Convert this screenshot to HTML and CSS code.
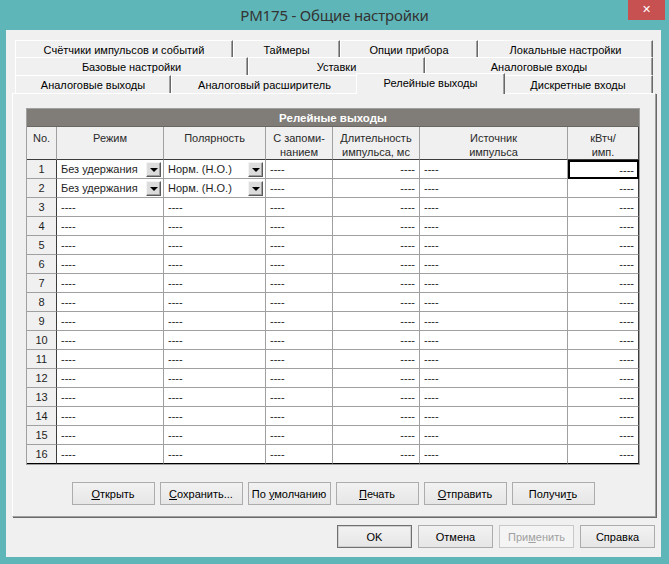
FILE: index.html
```html
<!DOCTYPE html>
<html lang="ru">
<head>
<meta charset="utf-8">
<title>PM175 - Общие настройки</title>
<link rel="stylesheet" href="styles.css">
</head>
<body>
<div class="window">
  <div class="titlebar">
    <div class="title">PM175 - Общие настройки</div>
    <div class="close">&#x2715;</div>
  </div>
  <div class="client">
    <div class="tabs">
      <div class="tab-row">
        <div class="tab t-counters">Счётчики импульсов и событий</div>
        <div class="tab t-timers">Таймеры</div>
        <div class="tab t-options">Опции прибора</div>
        <div class="tab t-local">Локальные настройки</div>
      </div>
      <div class="tab-row">
        <div class="tab t-base">Базовые настройки</div>
        <div class="tab t-setpoints">Уставки</div>
        <div class="tab t-ain">Аналоговые входы</div>
      </div>
      <div class="tab-row last">
        <div class="tab t-aout">Аналоговые выходы</div>
        <div class="tab t-ext">Аналоговый расширитель</div>
        <div class="tab t-relay selected">Релейные выходы</div>
        <div class="tab t-din">Дискретные входы</div>
      </div>
    </div>
    <div class="panel">
      <div class="grid-frame">
        <div class="grid">
          <div class="band">Релейные выходы</div>
          <div class="hc">No.</div>
          <div class="hc">Режим</div>
          <div class="hc">Полярность</div>
          <div class="hc">С запоми-<br>нанием</div>
          <div class="hc">Длительность<br>импульса, мс</div>
          <div class="hc">Источник<br>импульса</div>
          <div class="hc last">кВтч/<br>имп.</div>

          <div class="num">1</div>
          <div class="c"><span class="val">Без удержания</span><span class="dd"></span></div>
          <div class="c"><span class="val">Норм. (Н.О.)</span><span class="dd"></span></div>
          <div class="c">----</div>
          <div class="c r">----</div>
          <div class="c">----</div>
          <div class="c r last sel">----</div>

          <div class="num">2</div>
          <div class="c"><span class="val">Без удержания</span><span class="dd"></span></div>
          <div class="c"><span class="val">Норм. (Н.О.)</span><span class="dd"></span></div>
          <div class="c">----</div>
          <div class="c r">----</div>
          <div class="c">----</div>
          <div class="c r last">----</div>

          <div class="num">3</div><div class="c">----</div><div class="c">----</div><div class="c">----</div><div class="c r">----</div><div class="c">----</div><div class="c r last">----</div>
          <div class="num">4</div><div class="c">----</div><div class="c">----</div><div class="c">----</div><div class="c r">----</div><div class="c">----</div><div class="c r last">----</div>
          <div class="num">5</div><div class="c">----</div><div class="c">----</div><div class="c">----</div><div class="c r">----</div><div class="c">----</div><div class="c r last">----</div>
          <div class="num">6</div><div class="c">----</div><div class="c">----</div><div class="c">----</div><div class="c r">----</div><div class="c">----</div><div class="c r last">----</div>
          <div class="num">7</div><div class="c">----</div><div class="c">----</div><div class="c">----</div><div class="c r">----</div><div class="c">----</div><div class="c r last">----</div>
          <div class="num">8</div><div class="c">----</div><div class="c">----</div><div class="c">----</div><div class="c r">----</div><div class="c">----</div><div class="c r last">----</div>
          <div class="num">9</div><div class="c">----</div><div class="c">----</div><div class="c">----</div><div class="c r">----</div><div class="c">----</div><div class="c r last">----</div>
          <div class="num">10</div><div class="c">----</div><div class="c">----</div><div class="c">----</div><div class="c r">----</div><div class="c">----</div><div class="c r last">----</div>
          <div class="num">11</div><div class="c">----</div><div class="c">----</div><div class="c">----</div><div class="c r">----</div><div class="c">----</div><div class="c r last">----</div>
          <div class="num">12</div><div class="c">----</div><div class="c">----</div><div class="c">----</div><div class="c r">----</div><div class="c">----</div><div class="c r last">----</div>
          <div class="num">13</div><div class="c">----</div><div class="c">----</div><div class="c">----</div><div class="c r">----</div><div class="c">----</div><div class="c r last">----</div>
          <div class="num">14</div><div class="c">----</div><div class="c">----</div><div class="c">----</div><div class="c r">----</div><div class="c">----</div><div class="c r last">----</div>
          <div class="num">15</div><div class="c">----</div><div class="c">----</div><div class="c">----</div><div class="c r">----</div><div class="c">----</div><div class="c r last">----</div>
          <div class="num bottom">16</div><div class="c bottom">----</div><div class="c bottom">----</div><div class="c bottom">----</div><div class="c r bottom">----</div><div class="c bottom">----</div><div class="c r last bottom">----</div>
        </div>
      </div>
      <div class="actions">
        <button class="btn wide"><u>О</u>ткрыть</button>
        <button class="btn wide"><u>С</u>охранить...</button>
        <button class="btn wide">По <u>у</u>молчанию</button>
        <button class="btn wide"><u>П</u>ечать</button>
        <button class="btn wide"><u>О</u>тправить</button>
        <button class="btn wide">Получи<u>т</u>ь</button>
      </div>
    </div>
    <div class="dialog-buttons">
      <button class="btn dlg default">OK</button>
      <button class="btn dlg">Отмена</button>
      <button class="btn dlg disabled">При<u>м</u>енить</button>
      <button class="btn dlg">Справка</button>
    </div>
  </div>
</div>
</body>
</html>
```

FILE: styles.css
```css
* { box-sizing: border-box; }

body {
  margin: 0;
  background: #5fb6b8;
}

.window {
  width: 669px;
  height: 564px;
  background: #5fb6b8;
  font-family: "Liberation Sans", Arial, sans-serif;
  font-size: 11px;
  color: #000;
  display: flex;
  flex-direction: column;
}

.titlebar {
  height: 30px;
  display: grid;
  grid-template-columns: 1fr;
  align-items: start;
}

.title {
  grid-row: 1;
  grid-column: 1;
  justify-self: center;
  font-family: "Noto Sans", "Open Sans", sans-serif;
  font-size: 15px;
  letter-spacing: -0.2px;
  line-height: 30px;
  color: #333333;
}

.close {
  grid-row: 1;
  grid-column: 1;
  justify-self: end;
  margin-right: 4px;
  width: 37px;
  height: 20px;
  background: #c75050;
  color: #fff;
  font-family: "DejaVu Sans", sans-serif;
  font-size: 11px;
  font-weight: bold;
  line-height: 20px;
  text-align: center;
}

.client {
  margin: 0 8px 0 6px;
  height: 527px;
  background: #f0f0f0;
  padding: 10px 5px 0 6px;
  display: flex;
  flex-direction: column;
}

/* Tabs */
.tabs {
  margin: 0 3px;
  display: flex;
  flex-direction: column;
}

.tab-row {
  display: flex;
  height: 18px;
}
.tab-row:first-child { height: 17px; }

.tab {
  flex: none;
  height: 100%;
  display: flex;
  align-items: center;
  justify-content: center;
  background: #f0f0f0;
  border-top: 1px solid #ffffff;
  border-left: 1px solid #ffffff;
  border-right: 1px solid #696969;
  box-shadow: inset -1px 0 0 #a0a0a0;
  white-space: nowrap;
  padding-top: 1px;
}

.t-counters { width: 218px; }
.t-timers { width: 107px; }
.t-options { width: 138px; }
.t-local { width: 175px; }

.t-base { width: 233px; }
.t-setpoints { width: 177px; }
.t-ain { width: 228px; }

.t-aout { width: 156px; }
.t-ext { width: 187px; }
.t-relay { width: 145px; }
.t-din { width: 150px; }

.tab.selected {
  position: relative;
  z-index: 2;
  width: 149px;
  height: 21px;
  margin: -2px -2px -1px -2px;
  align-items: flex-start;
  padding-top: 3px;
}

/* Panel */
.panel {
  height: 424px;
  background: #f0f0f0;
  border: 1px solid;
  border-color: #ffffff #a0a0a0 #a0a0a0 #ffffff;
  box-shadow: 1px 1px 0 #696969;
  padding: 14px 0 0 13px;
  display: flex;
  flex-direction: column;
}

.grid-frame {
  width: 614px;
  border: 1px solid #a0a0a0;
  background: #f0f0f0;
}

.grid {
  display: grid;
  grid-template-columns: 30px 107px 102px 67px 87px 148px 71px;
  grid-template-rows: 18px 33px;
  grid-auto-rows: 19px;
  font-size: 11px;
  color: #1e1e1e;
}

.band {
  grid-column: 1 / -1;
  background: #807c77;
  color: #ffffff;
  font-weight: bold;
  font-size: 11.5px;
  display: flex;
  align-items: center;
  justify-content: center;
  border-bottom: 1px solid #6a6762;
}

.hc {
  background: #f0f0f0;
  border-right: 1px solid #a0a0a0;
  border-bottom: 1px solid #3c3c3c;
  text-align: center;
  line-height: 14px;
  padding-top: 4px;
  color: #2a2a2a;
}
.hc:first-of-type { border-right-color: #3c3c3c; }

.num {
  background: #f0f0f0;
  border-right: 1px solid #3c3c3c;
  border-bottom: 1px solid #a0a0a0;
  display: flex;
  align-items: center;
  justify-content: center;
}

.c {
  background: #ffffff;
  border-right: 1px solid #a0a0a0;
  border-bottom: 1px solid #a0a0a0;
  display: flex;
  align-items: center;
  padding: 0 4px;
  white-space: nowrap;
}
.c.r { justify-content: flex-end; }
.c.last, .hc.last { border-right-color: #3c3c3c; }
.bottom { border-bottom-color: #000000; }

.c.sel {
  border: 2px solid #000000;
  padding-right: 3px;
}

.val { flex: 1; }

.dd {
  flex: none;
  width: 15px;
  height: 15px;
  margin-right: -2px;
  background: #dcdcdc;
  border: 1px solid;
  border-color: #f4f4f4 #5a5a5a #5a5a5a #f4f4f4;
  box-shadow: inset -1px -1px 0 #a0a0a0;
  display: flex;
  align-items: center;
  justify-content: center;
}
.dd::after {
  content: "";
  width: 0;
  height: 0;
  border-left: 4px solid transparent;
  border-right: 4px solid transparent;
  border-top: 4px solid #000;
  margin-top: 1px;
}

/* Buttons */
.actions {
  width: 614px;
  margin-top: 17px;
  display: flex;
  justify-content: center;
  gap: 5px;
}

.btn {
  height: 23px;
  font-family: "Liberation Sans", Arial, sans-serif;
  font-size: 11px;
  color: #000;
  border: 1px solid #acacac;
  background: linear-gradient(#f2f2f2, #e6e6e6);
  padding: 0;
  margin: 0;
}
.btn.wide { width: 83px; }
.btn.dlg { width: 75px; }
.btn.default {
  border-color: #707070;
  box-shadow: inset 0 0 0 1px #cfcfcf;
}
.btn.disabled {
  color: #a0a0a0;
  border-color: #c8c8c8;
  background: #f4f4f4;
}

.dialog-buttons {
  margin-top: 8px;
  margin-right: 1px;
  display: flex;
  justify-content: flex-end;
  gap: 6px;
}
```
